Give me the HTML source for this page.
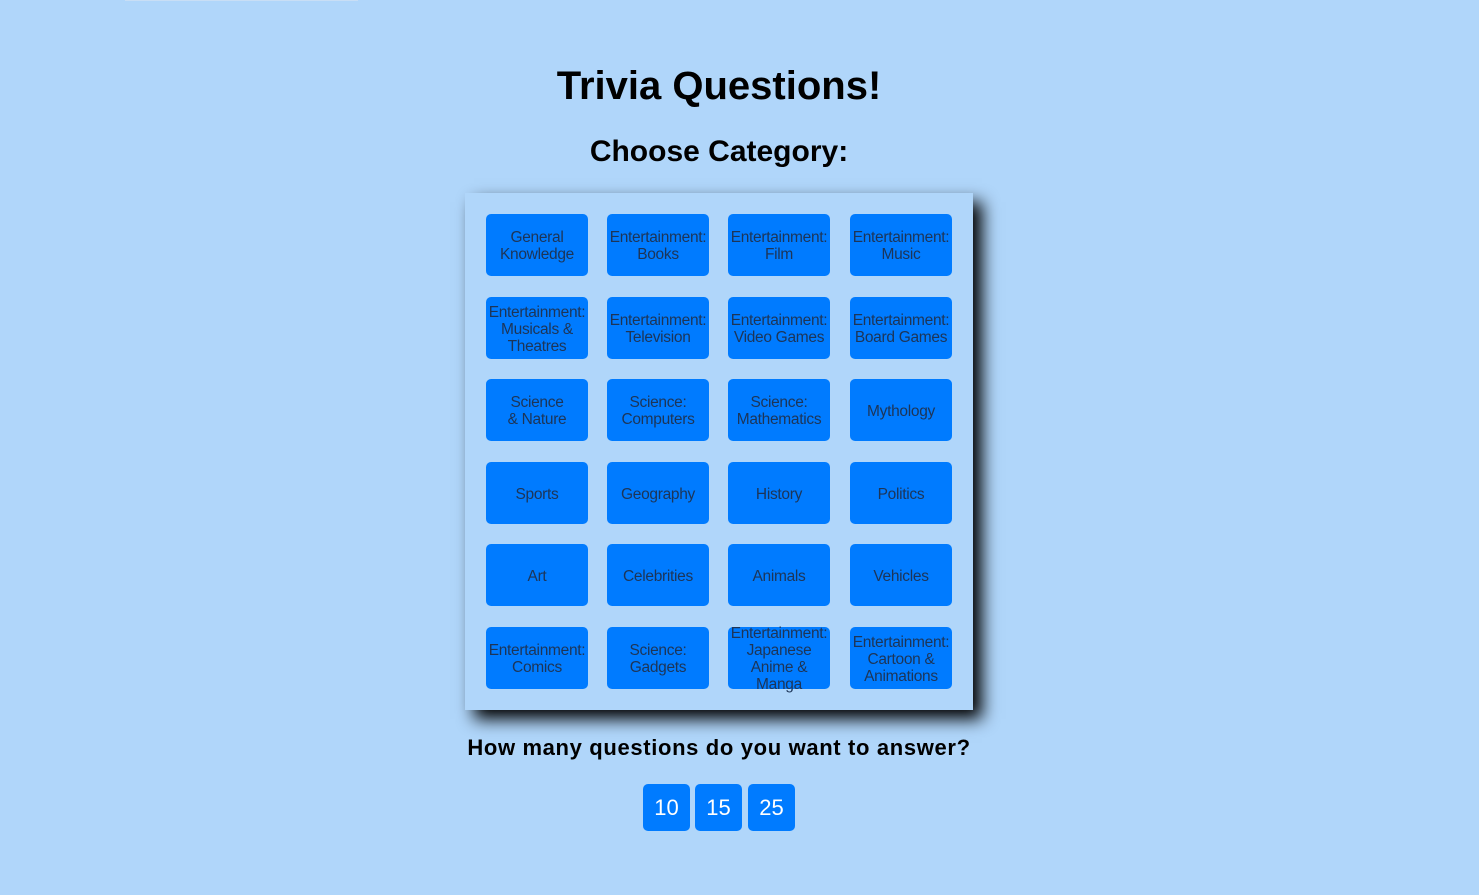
<!DOCTYPE html>
<html><head><style>
body{margin:0;background:#b0d6fa;font-family:"Liberation Sans",Arial,sans-serif;width:1479px;height:895px;position:relative;overflow:hidden}
.topline{position:absolute;left:125px;top:0;width:233px;height:1px;background:#c8def5}
h1{position:absolute;top:64px;left:0;width:1438px;margin:0;text-align:center;font-size:40px;font-weight:bold;color:#000}
h2{position:absolute;top:135px;left:0;width:1438px;margin:0;text-align:center;font-size:30px;font-weight:bold;color:#000}
.panel{position:absolute;left:465px;top:193px;width:508px;height:517px;background:#b0d6fa;box-shadow:9px 9px 16px #000;}
.b{position:absolute;width:102px;height:62px;background:#007bff;border-radius:5px;color:#1d3557;font-size:15.5px;line-height:17px;display:flex;align-items:center;justify-content:center;text-align:center;overflow:visible;padding-top:2px;box-sizing:border-box;letter-spacing:-0.3px}
h3{position:absolute;top:735px;left:0;width:1438px;margin:0;text-align:center;font-size:22px;font-weight:bold;color:#000;letter-spacing:0.65px}
.n{position:absolute;top:784px;width:47px;height:47px;background:#007bff;border-radius:5px;color:#fff;font-size:22px;display:flex;align-items:center;justify-content:center;padding-top:1px;box-sizing:border-box}
</style></head><body>
<div class="topline"></div>
<h1>Trivia Questions!</h1>
<h2>Choose Category:</h2>
<div class="panel"></div>
<div class="b" style="left:486px;top:214px">General<br>Knowledge</div>
<div class="b" style="left:607px;top:214px">Entertainment:<br>Books</div>
<div class="b" style="left:728px;top:214px">Entertainment:<br>Film</div>
<div class="b" style="left:850px;top:214px">Entertainment:<br>Music</div>
<div class="b" style="left:486px;top:297px">Entertainment:<br>Musicals &amp;<br>Theatres</div>
<div class="b" style="left:607px;top:297px">Entertainment:<br>Television</div>
<div class="b" style="left:728px;top:297px">Entertainment:<br>Video Games</div>
<div class="b" style="left:850px;top:297px">Entertainment:<br>Board Games</div>
<div class="b" style="left:486px;top:379px">Science<br>&amp; Nature</div>
<div class="b" style="left:607px;top:379px">Science:<br>Computers</div>
<div class="b" style="left:728px;top:379px">Science:<br>Mathematics</div>
<div class="b" style="left:850px;top:379px">Mythology</div>
<div class="b" style="left:486px;top:462px">Sports</div>
<div class="b" style="left:607px;top:462px">Geography</div>
<div class="b" style="left:728px;top:462px">History</div>
<div class="b" style="left:850px;top:462px">Politics</div>
<div class="b" style="left:486px;top:544px">Art</div>
<div class="b" style="left:607px;top:544px">Celebrities</div>
<div class="b" style="left:728px;top:544px">Animals</div>
<div class="b" style="left:850px;top:544px">Vehicles</div>
<div class="b" style="left:486px;top:627px">Entertainment:<br>Comics</div>
<div class="b" style="left:607px;top:627px">Science:<br>Gadgets</div>
<div class="b" style="left:728px;top:627px">Entertainment:<br>Japanese<br>Anime &amp;<br>Manga</div>
<div class="b" style="left:850px;top:627px">Entertainment:<br>Cartoon &amp;<br>Animations</div>
<h3>How many questions do you want to answer?</h3>
<div class="n" style="left:643px">10</div>
<div class="n" style="left:695px">15</div>
<div class="n" style="left:748px">25</div>
</body></html>
